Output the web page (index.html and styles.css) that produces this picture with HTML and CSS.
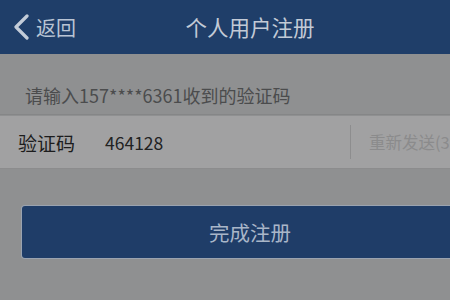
FILE: index.html
```html
<!DOCTYPE html>
<html lang="zh">
<head>
<meta charset="utf-8">
<link rel="stylesheet" href="styles.css">
</head>
<body>
<div class="screen">
  <header class="nav">
    <div class="back">
      <svg class="chev" width="17" height="26" viewBox="0 0 17 26"><path d="M14 2 L3 13 L14 24" fill="none" stroke="currentColor" stroke-width="3.2" stroke-linecap="round" stroke-linejoin="round"/></svg>
      <span>返回</span>
    </div>
    <div class="title">个人用户注册</div>
  </header>
  <div class="hint">请输入157****6361收到的验证码</div>
  <div class="row">
    <span class="label">验证码</span>
    <span class="value">464128</span>
    <span class="sep"></span>
    <span class="resend">重新发送(30)</span>
  </div>
  <div class="btn-wrap">
    <div class="btn">完成注册</div>
  </div>
</div>
</body>
</html>
```

FILE: styles.css
```css
html, body {
  margin: 0;
  padding: 0;
  width: 450px;
  height: 300px;
  overflow: hidden;
  background: #8f9091;
  font-family: "Noto Sans CJK SC", "Noto Sans", sans-serif;
}
.screen {
  width: 500px;
}
.nav {
  height: 54px;
  background: #1f3e69;
  display: flex;
  align-items: center;
  position: relative;
  color: #b9c4d4;
}
.back {
  display: flex;
  align-items: center;
  padding-left: 13px;
  font-size: 20px;
  gap: 6px;
}
.chev {
  color: #c3ccd8;
}
.title {
  position: absolute;
  left: 0;
  right: 0;
  top: 0;
  line-height: 54px;
  text-align: center;
  font-size: 21.5px;
  color: #c2cad6;
  pointer-events: none;
}
.hint {
  height: 61px;
  box-sizing: border-box;
  padding-left: 25px;
  padding-top: 29px;
  font-size: 18px;
  line-height: 24px;
  color: #4b4c4d;
  border-bottom: 1px solid #858687;
}
.row {
  margin-top: 1px;
  height: 52px;
  background: #a1a1a2;
  display: flex;
  align-items: center;
  border-bottom: 1px solid #8c8c8d;
}
.label {
  padding-left: 18px;
  font-size: 19px;
  color: #1c1c1d;
  width: 87px;
}
.value {
  font-size: 17.5px;
  color: #222;
  width: 245px;
}
.sep {
  width: 1px;
  height: 34px;
  background: #8d8d8e;
  margin-right: 18px;
}
.resend {
  font-size: 16.5px;
  color: #8b8b8c;
  white-space: nowrap;
}
.btn-wrap {
  padding: 37px 22px 0;
}
.btn {
  height: 52px;
  background: #1f3d68;
  border-radius: 3px;
  display: flex;
  align-items: center;
  justify-content: center;
  font-size: 20.5px;
  color: #a9b6c8;
  box-shadow: 0 0 0 1px #9aa3b0;
}
```
